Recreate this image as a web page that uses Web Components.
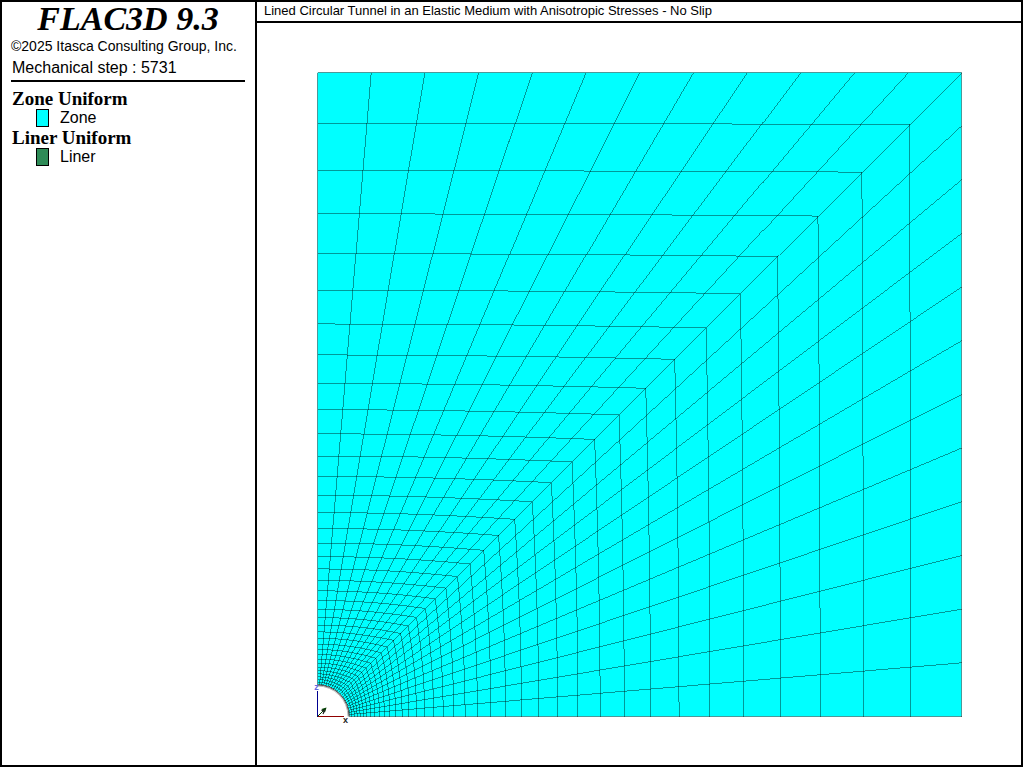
<!DOCTYPE html>
<html lang="en">
<head>
    <meta charset="UTF-8">
    <meta name="viewport" content="width=device-width, initial-scale=1.0">
    <title>FLAC3D 9.3</title>
    <style>
        html, body {
            height: 100%;
            margin: 0;
            background: #fff;
        }

        body {
            font-family: "Liberation Sans", Arial, sans-serif;
            color: #000;
        }
    </style>
</head>
<body>
    <plot-window>
        <plot-legend slot="legend" product="FLAC3D 9.3">
            <span slot="copyright">©2025 Itasca Consulting Group, Inc.</span>
            <span slot="step">Mechanical step : 5731</span>
            <legend-group heading="Zone Uniform">
                <legend-entry color="#00ffff">Zone</legend-entry>
            </legend-group>
            <legend-group heading="Liner Uniform">
                <legend-entry color="#2e8b57">Liner</legend-entry>
            </legend-group>
        </plot-legend>
        <span slot="title">Lined Circular Tunnel in an Elastic Medium with Anisotropic Stresses - No Slip</span>
        <tunnel-mesh sectors="24" rings="38" ratio="0.92"></tunnel-mesh>
    </plot-window>

    <script>
        class PlotWindow extends HTMLElement {
            constructor() {
                super();
                this.attachShadow({ mode: 'open' });
                this.shadowRoot.innerHTML = `
                    <style>
                        :host {
                            display: block;
                            height: 100%;
                            padding: 0 1px 1px 0;
                            box-sizing: border-box;
                        }
                        .frame {
                            display: grid;
                            grid-template-columns: 253px 1fr;
                            height: 100%;
                            box-sizing: border-box;
                            border: 2px solid #000;
                        }
                        main {
                            display: flex;
                            flex-direction: column;
                            min-width: 0;
                            min-height: 0;
                            border-left: 2px solid #000;
                        }
                        h1 {
                            margin: 0;
                            padding: 0 7px 1px;
                            border-bottom: 2px solid #000;
                            font-size: 13px;
                            line-height: 18px;
                            font-weight: normal;
                        }
                        .view {
                            flex: 1;
                            min-height: 0;
                        }
                    </style>
                    <div class="frame">
                        <slot name="legend"></slot>
                        <main>
                            <h1><slot name="title"></slot></h1>
                            <div class="view"><slot></slot></div>
                        </main>
                    </div>
                `;
            }
        }

        class PlotLegend extends HTMLElement {
            constructor() {
                super();
                this.attachShadow({ mode: 'open' });
                this.shadowRoot.innerHTML = `
                    <style>
                        :host {
                            display: block;
                            padding: 0 10px 0 9px;
                            font-size: 16px;
                        }
                        h2 {
                            margin: 0;
                            font: italic bold 34px/34px "Liberation Serif", "Times New Roman", serif;
                            text-align: center;
                        }
                        p {
                            margin: 0;
                            line-height: 21px;
                            white-space: nowrap;
                        }
                        .copyright {
                            font-size: 14px;
                        }
                        .step {
                            padding: 0 1px 2px;
                        }
                        hr {
                            margin: 0 0 7px;
                            border: 0;
                            border-top: 2px solid #000;
                        }
                    </style>
                    <h2></h2>
                    <p class="copyright"><slot name="copyright"></slot></p>
                    <p class="step"><slot name="step"></slot></p>
                    <hr>
                    <slot></slot>
                `;
            }

            connectedCallback() {
                this.shadowRoot.querySelector('h2').textContent = this.getAttribute('product');
            }
        }

        class LegendGroup extends HTMLElement {
            constructor() {
                super();
                this.attachShadow({ mode: 'open' });
                this.shadowRoot.innerHTML = `
                    <style>
                        :host {
                            display: block;
                            padding-left: 1px;
                        }
                        h3 {
                            margin: 0;
                            font: bold 19px/19px "Liberation Serif", "Times New Roman", serif;
                        }
                    </style>
                    <h3></h3>
                    <slot></slot>
                `;
            }

            connectedCallback() {
                this.shadowRoot.querySelector('h3').textContent = this.getAttribute('heading');
            }
        }

        class LegendEntry extends HTMLElement {
            constructor() {
                super();
                this.attachShadow({ mode: 'open' });
                this.shadowRoot.innerHTML = `
                    <style>
                        :host {
                            display: flex;
                            align-items: center;
                            gap: 11px;
                            padding-left: 24px;
                            line-height: 20px;
                        }
                        .swatch {
                            width: 11px;
                            height: 16px;
                            border: 1px solid #000;
                        }
                    </style>
                    <span class="swatch"></span>
                    <slot></slot>
                `;
            }

            connectedCallback() {
                this.shadowRoot.querySelector('.swatch').style.background = this.getAttribute('color');
            }
        }

        // Quarter model: rays run from the tunnel wall to the square outer boundary,
        // and the rings get thinner by a constant ratio towards the tunnel.
        class TunnelMesh extends HTMLElement {
            constructor() {
                super();
                this.attachShadow({ mode: 'open' });
                this.size = 644;
                this.radius = 32;
                this.origin = { x: 60.5, y: 693.5 };
            }

            connectedCallback() {
                this.sectors = Number(this.getAttribute('sectors'));
                this.rings = Number(this.getAttribute('rings'));
                this.ratio = Number(this.getAttribute('ratio'));
                this.render();
            }

            // t = 0 on the tunnel wall, t = 1 on the outer boundary
            point(sector, t) {
                const half = this.sectors / 2;
                const angle = sector / this.sectors * Math.PI / 2;
                const inner = [this.radius * Math.sin(angle), this.radius * Math.cos(angle)];
                const outer = [
                    this.size * Math.min(1, sector / half),
                    this.size * Math.min(1, (this.sectors - sector) / half)
                ];
                const x = this.origin.x + inner[0] + (outer[0] - inner[0]) * t;
                const y = this.origin.y - inner[1] - (outer[1] - inner[1]) * t;
                return `${x.toFixed(2)} ${y.toFixed(2)}`;
            }

            ring(t) {
                const points = [];
                for (let s = 0; s <= this.sectors; s++) {
                    points.push(this.point(s, t));
                }
                return points;
            }

            arc(r) {
                const { x, y } = this.origin;
                return `M${x} ${y - r}A${r} ${r} 0 0 1 ${x + r} ${y}`;
            }

            render() {
                const { x, y } = this.origin;
                const lines = [];
                const total = 1 - Math.pow(this.ratio, this.rings);

                for (let r = 0; r <= this.rings; r++) {
                    const t = 1 - (1 - Math.pow(this.ratio, r)) / total;
                    lines.push('M' + this.ring(t).join('L'));
                }
                for (let s = 0; s <= this.sectors; s++) {
                    lines.push(`M${this.point(s, 0)}L${this.point(s, 1)}`);
                }

                const body = 'M' + this.ring(1).concat(this.ring(0).reverse()).join('L') + 'Z';

                this.shadowRoot.innerHTML = `
                    <style>
                        :host {
                            display: block;
                            height: 100%;
                        }
                        svg {
                            display: block;
                            width: 100%;
                            height: 100%;
                        }
                        .body {
                            fill: #00ffff;
                        }
                        .grid path {
                            fill: none;
                            stroke: #000;
                            stroke-width: 0.95;
                            stroke-opacity: 0.42;
                            shape-rendering: crispEdges;
                        }
                        .wall {
                            fill: none;
                            stroke: #555;
                        }
                        .wall.inner {
                            stroke: #bbb;
                        }
                        .axis {
                            fill: none;
                            shape-rendering: crispEdges;
                        }
                        text {
                            font: bold 9px "Liberation Sans", Arial, sans-serif;
                            text-anchor: middle;
                        }
                    </style>
                    <svg viewBox="0 0 764 742" role="img" aria-label="Zone mesh around the tunnel">
                        <path class="body" d="${body}"/>
                        <g class="grid">${lines.map(d => `<path d="${d}"/>`).join('')}</g>
                        <path class="wall inner" d="${this.arc(this.radius - 1.5)}"/>
                        <path class="wall" d="${this.arc(this.radius - 0.5)}"/>
                        <path class="axis" stroke="#000090" d="M${x} ${y}v-26"/>
                        <path class="axis" stroke="#900000" d="M${x} ${y}h26"/>
                        <path stroke="#004000" d="M${x} ${y}l7 -7"/>
                        <path fill="#004000" d="M${x + 9} ${y - 9}l-5 1.5l3.5 3.5z"/>
                        <path stroke="#222" stroke-width="1.2" fill="none" d="M${x + 4} ${y - 6.5}l2.5 1.5M${x + 7.5} ${y - 7}l-2 4.5"/>
                        <text x="${x + 28}" y="${y + 6}" fill="#222">x</text>
                        <text x="${x - 1}" y="${y - 27}" fill="#6666e0">z</text>
                    </svg>
                `;
            }
        }

        customElements.define('plot-window', PlotWindow);
        customElements.define('plot-legend', PlotLegend);
        customElements.define('legend-group', LegendGroup);
        customElements.define('legend-entry', LegendEntry);
        customElements.define('tunnel-mesh', TunnelMesh);
    </script>
</body>
</html>
